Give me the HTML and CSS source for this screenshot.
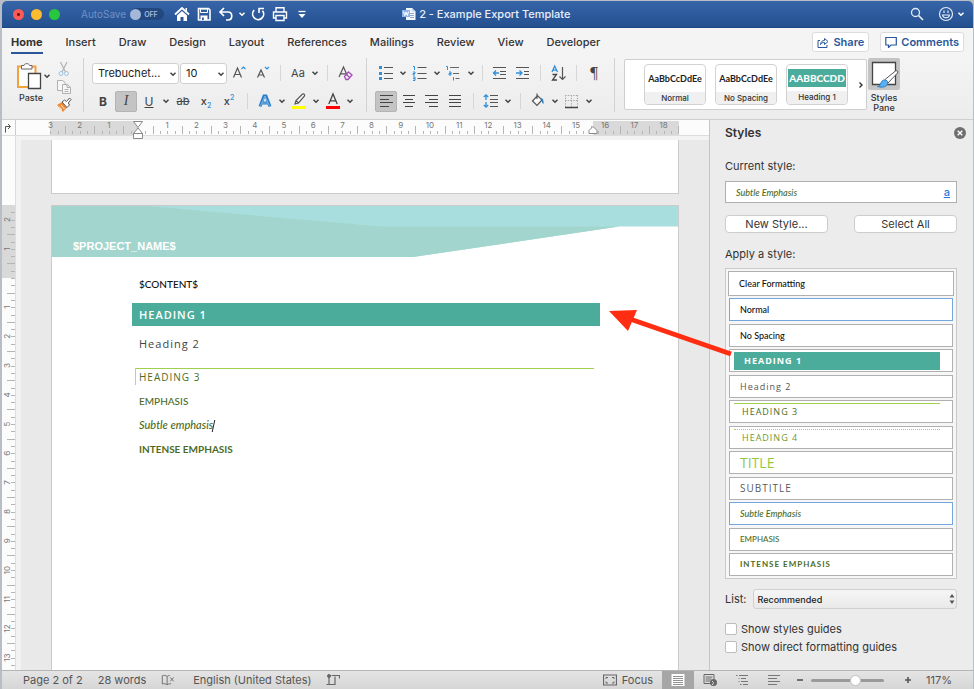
FILE: index.html
```html
<!DOCTYPE html>
<html lang="en">
  <head>
    <meta charset="UTF-8" />
    <meta name="viewport" content="width=device-width, initial-scale=1.0" />
    <title>2 - Example Export Template</title>
    <link rel="stylesheet" href="styles.css">
  </head>
  <body>
    <svg class="defs" aria-hidden="true">
      <symbol id="chev" viewBox="0 0 8 8"><path d="M1.5 2.8 4 5.3 6.5 2.8" fill="none" stroke="currentColor" stroke-width="1.5" /></symbol>
      <symbol id="align-left" viewBox="0 0 20 20"><path d="M4 4.500h13M4 8.500h9M4 11.500h13M4 15.500h9" stroke="#444" stroke-width="1.2" /></symbol>
    </svg>

    <div id="app">
      <header id="titlebar">
        <div class="lights">
          <button class="light red" aria-label="Close"></button>
          <button class="light yellow" aria-label="Minimize"></button>
          <button class="light green" aria-label="Zoom"></button>
        </div>
        <label class="autosave" for="autosave">AutoSave</label>
        <button class="toggle" id="autosave"><span class="knob"></span>OFF</button>
        <div class="quick">
          <button class="qbtn" aria-label="Home"><svg viewBox="0 0 16 16"><path d="M1 8.500 8 2l7 6.500" fill="none" stroke="#fff" stroke-width="1.800" /><path d="M3 9.500 8 5l5 4.500V15H9.500v-4h-3v4H3z" fill="#fff" /><path d="M11.500 2H13v4l-1.500-1.500z" fill="#fff" /></svg></button>
          <button class="qbtn" aria-label="Save"><svg viewBox="0 0 16 16"><path d="M2.500 2.500h10l1.500 1.500v10h-11.500z" fill="none" stroke="#fff" stroke-width="1.600" /><path d="M4.500 3h7v3.500h-7z" fill="none" stroke="#fff" /><path d="M4.500 9.500h7V14h-7z" fill="#fff" /><path d="M6 11.500h1.800V14H6z" fill="#2c5aa0" /></svg></button>
          <button class="qbtn" aria-label="Undo"><svg viewBox="0 0 16 16"><path d="M6 2 2 6l4 4M2.500 6h7.500c5 0 5 8 0 8H8" fill="none" stroke="#fff" stroke-width="1.700" /></svg></button>
          <button class="qchev" aria-label="Undo list"><svg viewBox="0 0 8 8"><use href="#chev" /></svg></button>
          <button class="qbtn" aria-label="Redo"><svg viewBox="0 0 16 16"><path d="M4.200 4.200a5.500 5.500 0 1 0 8.300.5" fill="none" stroke="#fff" stroke-width="1.700" /><path d="M9 7V2.500h5" fill="none" stroke="#fff" stroke-width="1.600" /></svg></button>
          <button class="qbtn" aria-label="Print"><svg viewBox="0 0 16 16" fill="none" stroke="#fff" stroke-width="1.400"><path d="M4 6V1.700h8V6M4 12H1.500V6h13v6H12" /><path d="M4 9.500h8v5H4z" /></svg></button>
          <button class="qbtn" aria-label="Customize"><svg viewBox="0 0 16 16"><path d="M4.500 5.500h7" stroke="#fff" stroke-width="1.300" /><path d="M4.500 8h7L8 12z" fill="#fff" /></svg></button>
        </div>
        <h1 class="doc-title">
          <svg viewBox="0 0 14 14"><path d="M4 1h6l3.500 3.500V13H4z" fill="#f3f7fd" /><path d="M10 1v3.500h3.500" fill="#bcd0ee" /><path d="M8 6.500h4M8 8.500h4M8 10.500h4" stroke="#8fa9d2" /><path d="M0 3h8v7H0z" fill="#8fb4e8" /><path d="m1.500 4.500 1.200 4L4 5l1.300 3.500 1.200-4" fill="none" stroke="#fff" /></svg>
          2 - Example Export Template
        </h1>
        <button class="qbtn search" aria-label="Search"><svg viewBox="0 0 16 16" fill="none" stroke="#e4ebf7"><circle cx="6.500" cy="6.500" r="4" stroke-width="1.300" /><path d="m9.500 9.500 4.500 4.500" stroke-width="1.700" /></svg></button>
        <button class="qbtn smile" aria-label="Feedback"><svg viewBox="0 0 16 16" fill="none" stroke="#e4ebf7" stroke-width="1.200"><circle cx="8" cy="8" r="6.500" /><path d="M4.500 9c.8 3.800 6.200 3.800 7 0zM6 4.500v2.500M10 4.500v2.500" /></svg></button>
        <button class="qchev" aria-label="Feedback menu"><svg viewBox="0 0 8 8"><use href="#chev" /></svg></button>
      </header>

      <nav id="tabs">
        <a href="#" class="tab active">Home</a>
        <a href="#" class="tab">Insert</a>
        <a href="#" class="tab">Draw</a>
        <a href="#" class="tab">Design</a>
        <a href="#" class="tab">Layout</a>
        <a href="#" class="tab">References</a>
        <a href="#" class="tab">Mailings</a>
        <a href="#" class="tab">Review</a>
        <a href="#" class="tab">View</a>
        <a href="#" class="tab">Developer</a>
        <button class="pill share"><svg viewBox="0 0 12 12" fill="none" stroke="#2b579a"><path d="M3 4.500H1v7h9V9" /><path d="M3.500 8.500c.3-3 2-4 4-4V2.500L11 5.500 7.500 8.500v-2c-2 0-3 .5-4 2z" /></svg>Share</button>
        <button class="pill"><svg viewBox="0 0 12 12" fill="none" stroke="#2b579a"><path d="M.8 1.500h10.500v7.500H6L3.500 11.500V9H.8z" stroke-width="1.200" /></svg>Comments</button>
      </nav>

      <section id="ribbon">
        <div class="group clipboard">
          <button class="paste">
            <span class="paste-top">
              <svg class="paste-icon" viewBox="0 0 26 28"><path d="M2 4.500h17.500v20.500H2z" fill="#fdfdfd" stroke="#f2a23c" stroke-width="2" /><path d="M5.500 7V3.500H8c.3-2.500 5.200-2.500 5.500 0H16V7z" fill="#fff" stroke="#666" /><path d="M12.500 11.500h12v15h-12z" fill="#fff" stroke="#444" stroke-width="1.300" /></svg>
              <svg class="chev" viewBox="0 0 8 8"><use href="#chev" /></svg>
            </span>
            <span>Paste</span>
          </button>
          <div class="clip-tools">
            <button aria-label="Cut"><svg viewBox="0 0 16 16" fill="none"><path d="m4.500 1 5 10M11 1 6 11" stroke="#b5b5b5" stroke-width="1.300" /><circle cx="5" cy="12.500" r="2" stroke="#9cc4e4" /><circle cx="10.500" cy="12.500" r="2" stroke="#9cc4e4" /></svg></button>
            <button aria-label="Copy"><svg viewBox="0 0 16 16" fill="#f7f7f7" stroke="#b0b0b0"><path d="M1.500 1.500h5l2.500 2v8H1.500z" /><path d="M6.500 5.500h5l3 3v6h-8zM11 5.500v3h3.500M8.500 10.500h4M8.500 12.500h4" /></svg></button>
            <button aria-label="Format painter"><svg viewBox="0 0 16 16"><path d="m1 8 5-3 5 5.500-4 4.500z" fill="#ef8a33" /><path d="M3 9.500 6 13M5 8l3.500 4" stroke="#fff" stroke-width=".8" /><path d="m6 5 2.500-2 2 1.500L13.500 1l1.500 1.500-2.700 3.500 1.200 2L11 10.500z" fill="#fff" stroke="#555" /></svg></button>
          </div>
        </div>

        <div class="group font">
          <div class="tool-row">
            <span class="picker family"><select aria-label="Font"><option>Trebuchet...</option></select><svg class="chev" viewBox="0 0 8 8"><use href="#chev" /></svg></span>
            <span class="picker size"><select aria-label="Font size"><option>10</option></select><svg class="chev" viewBox="0 0 8 8"><use href="#chev" /></svg></span>
            <button class="tool" aria-label="Grow font"><svg viewBox="0 0 20 20" fill="none"><path d="M4.500 14.500 8.500 5l4 9.500M5.800 11.500h5.400" stroke="#555" stroke-width="1.200" /><path d="m12.500 6 2-2 2 2" stroke="#2f8fd8" stroke-width="1.200" /></svg></button>
            <button class="tool" aria-label="Shrink font"><svg viewBox="0 0 20 20" fill="none"><path d="M5.500 14.500 9 7l3.500 7.500M6.800 12h4.500" stroke="#555" stroke-width="1.200" /><path d="m13 4 2 2 2-2" stroke="#2f8fd8" stroke-width="1.200" /></svg></button>
            <span class="sep"></span>
            <button class="tool case">Aa</button>
            <button class="drop" aria-label="Change case"><svg class="chev" viewBox="0 0 8 8"><use href="#chev" /></svg></button>
            <span class="sep"></span>
            <button class="tool" aria-label="Clear formatting"><svg viewBox="0 0 20 20" fill="none"><path d="M4 14 8.500 4 12 12M5.500 10.800h5.500" stroke="#555" stroke-width="1.200" /><path d="m9.500 13.500 4-4.500 3.500 3-4 4.500h-2zM11.500 11.500l3 3" stroke="#a44fb5" stroke-width="1.300" /></svg></button>
          </div>
          <div class="tool-row">
            <button class="tool bold">B</button>
            <button class="tool italic on">I</button>
            <button class="tool under">U</button>
            <button class="drop" aria-label="Underline styles"><svg class="chev" viewBox="0 0 8 8"><use href="#chev" /></svg></button>
            <button class="tool strike">ab</button>
            <button class="tool script">x<sub>2</sub></button>
            <button class="tool script">x<sup>2</sup></button>
            <span class="sep"></span>
            <button class="tool" aria-label="Text effects"><svg viewBox="0 0 20 20"><path d="M5 15.500 9 5h2l4 10.500M6.500 12h7" fill="none" stroke="#2a7fc9" stroke-width="3" /><path d="M5.500 15 10 5l4.500 10M7 12h6" fill="none" stroke="#8dc3f0" stroke-width=".8" /></svg></button>
            <button class="drop" aria-label="Effects list"><svg class="chev" viewBox="0 0 8 8"><use href="#chev" /></svg></button>
            <button class="tool" aria-label="Highlight"><svg viewBox="0 0 20 20"><path d="m6 13 1-3.500 6.500-6.500c1.500-.5 2.500.7 2 2L9.500 12zM7 9.500 9.500 12" fill="#f8f8f8" stroke="#555" stroke-width="1.200" /><path d="M3 15h14v3H3z" fill="#ffff00" /></svg></button>
            <button class="drop" aria-label="Highlight colors"><svg class="chev" viewBox="0 0 8 8"><use href="#chev" /></svg></button>
            <button class="tool" aria-label="Font color"><svg viewBox="0 0 20 20"><path d="m5.800 13 4.200-10 4.200 10M7.300 9.800h5.400" fill="none" stroke="#444" stroke-width="1.300" /><path d="M3 15h14v3H3z" fill="#ff0000" /></svg></button>
            <button class="drop" aria-label="Font colors"><svg class="chev" viewBox="0 0 8 8"><use href="#chev" /></svg></button>
          </div>
        </div>

        <div class="group paragraph">
          <div class="tool-row">
            <button class="tool" aria-label="Bullets"><svg viewBox="0 0 20 20"><path d="M3 3h3v3H3zM3 9h3v3H3zM3 14h3v3H3z" fill="#2f8fd8" /><path d="M8 4.500h9M8 10.500h9M8 15.500h9" stroke="#555" stroke-width="1.200" /></svg></button>
            <button class="drop" aria-label="Bullet styles"><svg class="chev" viewBox="0 0 8 8"><use href="#chev" /></svg></button>
            <button class="tool" aria-label="Numbering"><svg viewBox="0 0 20 20"><path d="M3 3.500h1.500V7M3 9h2v1.500H3V12h2M3 14h2v3.500H3M3 15.700h2" fill="none" stroke="#2f8fd8" /><path d="M7.500 4.500h9M7.500 10.500h9M7.500 15.500h9" stroke="#555" stroke-width="1.200" /></svg></button>
            <button class="drop" aria-label="Number styles"><svg class="chev" viewBox="0 0 8 8"><use href="#chev" /></svg></button>
            <button class="tool" aria-label="Multilevel list"><svg viewBox="0 0 20 20"><path d="M2 3.500h1.500V7M5 9h2v3H5v-1.500h2M9.500 14v3.500" fill="none" stroke="#2f8fd8" /><path d="M6 4.500h9M9 10.500h6M11.500 15.500h4" stroke="#666" stroke-width="1.200" /></svg></button>
            <button class="drop" aria-label="List styles"><svg class="chev" viewBox="0 0 8 8"><use href="#chev" /></svg></button>
            <span class="sep"></span>
            <button class="tool" aria-label="Decrease indent"><svg viewBox="0 0 20 20" fill="none"><path d="M3 4.500h13M10 8.500h6M10 11.500h6M3 15.500h13" stroke="#555" stroke-width="1.200" /><path d="M9 10H3.500M6 7.500 3.500 10 6 12.500" stroke="#2f8fd8" stroke-width="1.300" /></svg></button>
            <button class="tool" aria-label="Increase indent"><svg viewBox="0 0 20 20" fill="none"><path d="M3 4.500h13M11 8.500h5M11 11.500h5M3 15.500h13" stroke="#555" stroke-width="1.200" /><path d="M3 10h5.500M6.500 7.500 9 10l-2.500 2.500" stroke="#2f8fd8" stroke-width="1.300" /></svg></button>
            <span class="sep"></span>
            <button class="tool" aria-label="Sort"><svg viewBox="0 0 20 20" fill="none"><path d="M3 9 5.700 3 8.500 9M4 7.200h3.500" stroke="#2f8fd8" stroke-width="1.300" /><path d="M3.500 11.500h4L3.500 17h4.500" stroke="#444" stroke-width="1.300" /><path d="M13.500 4v12.500M10.500 13.500l3 3 3-3" stroke="#555" stroke-width="1.200" /></svg></button>
            <span class="sep"></span>
            <button class="tool pilcrow">¶</button>
          </div>
          <div class="tool-row">
            <button class="tool on" aria-label="Align left"><svg viewBox="0 0 20 20"><use href="#align-left" /></svg></button>
            <button class="tool" aria-label="Center"><svg viewBox="0 0 20 20"><path d="M4 4.500h12M6 8.500h8M4 11.500h12M6 15.500h8" stroke="#444" stroke-width="1.200" /></svg></button>
            <button class="tool" aria-label="Align right"><svg viewBox="0 0 20 20"><path d="M3 4.500h13M7 8.500h9M3 11.500h13M7 15.500h9" stroke="#444" stroke-width="1.200" /></svg></button>
            <button class="tool" aria-label="Justify"><svg viewBox="0 0 20 20"><path d="M4 4.500h12M4 8.500h12M4 11.500h12M4 15.500h12" stroke="#444" stroke-width="1.200" /></svg></button>
            <span class="sep"></span>
            <button class="tool" aria-label="Line spacing"><svg viewBox="0 0 20 20" fill="none"><path d="M5 4v5M5 11v5M2.800 6 5 3.800 7.200 6M2.800 14 5 16.200 7.200 14" stroke="#2f8fd8" stroke-width="1.300" /><path d="M9 4.500h8M9 8.500h8M9 11.500h8M9 15.500h8" stroke="#555" stroke-width="1.200" /></svg></button>
            <button class="drop" aria-label="Spacing options"><svg class="chev" viewBox="0 0 8 8"><use href="#chev" /></svg></button>
            <span class="sep"></span>
            <button class="tool" aria-label="Shading"><svg viewBox="0 0 20 20"><path d="m4.500 10 5-5.500 4.500 4.500-5 5.500zM9 2.500V8" fill="#fafafa" stroke="#555" stroke-width="1.200" /><path d="M12 7c3-.5 4 2.500 3.500 6-1.500-1-2-2.500-1.500-4z" fill="#2a7fc9" /></svg></button>
            <button class="drop" aria-label="Shading colors"><svg class="chev" viewBox="0 0 8 8"><use href="#chev" /></svg></button>
            <button class="tool" aria-label="Borders"><svg viewBox="0 0 20 20"><path d="M3.500 4v12M9.500 4v12M15.500 4v12M3 4.500h13M3 9.500h13" stroke="#aaa" stroke-dasharray="1.500 1.200" /><path d="M3 16.500h13" stroke="#444" stroke-width="1.500" /></svg></button>
            <button class="drop" aria-label="Border styles"><svg class="chev" viewBox="0 0 8 8"><use href="#chev" /></svg></button>
          </div>
        </div>

        <div class="gallery">
          <button class="card"><span class="preview">AaBbCcDdEe</span><span class="name">Normal</span></button>
          <button class="card"><span class="preview">AaBbCcDdEe</span><span class="name">No Spacing</span></button>
          <button class="card"><span class="preview filled"><b>AABBCCDD</b></span><span class="name">Heading 1</span></button>
          <button class="more" aria-label="More styles"><svg viewBox="0 0 8 8"><path d="M2.500 1.500 5 4 2.500 6.500" fill="none" stroke="#333" stroke-width="1.400" /></svg></button>
        </div>
        <button class="styles-btn">
          <span class="styles-icon"><svg viewBox="0 0 32 30"><path d="M4.500 3.500h23v22h-23z" fill="#fff" stroke="#444" stroke-width="1.300" /><path d="M17 20.500 27.500 12c2-.8 2.800.3 2 2L20 24z" fill="#fff" stroke="#555" /><path d="M9.500 27.500c4 0 2.500-7 7.500-6.500 3 .2 3.500 3.500 1.500 5.500s-6 2-9 1z" fill="#5cb0f0" stroke="#2a7fc9" /></svg></span>
          <span>Styles<br>Pane</span>
        </button>
      </section>

      <main id="workspace">
        <div id="editor">
          <div class="hruler">
            <span class="tab-stop"><svg viewBox="0 0 8 10"><path d="M1.500 9.500V3.500H6M4 1l2.500 2.500L4 6" fill="none" stroke="#555" /></svg></span>
            <svg id="ruler-x"></svg>
          </div>
          <div class="canvas">
            <svg id="ruler-y"></svg>
            <div class="pages">
              <article class="page previous"></article>
              <article class="page current">
                <div class="page-header">
                  <svg viewBox="0 0 628 52" preserveAspectRatio="none"><path d="M0 0h628v21h-59L362 52H0z" fill="#a8dedd" /><path d="M0 0h95L330 21h239L362 52H0z" fill="#a2d5cd" /></svg>
                  <p>$PROJECT_NAME$</p>
                </div>
                <div class="content">
                  <p class="normal">$CONTENT$</p>
                  <h2 class="h1">HEADING 1</h2>
                  <h3 class="h2">Heading 2</h3>
                  <h4 class="h3">HEADING 3</h4>
                  <p class="emphasis">EMPHASIS</p>
                  <p class="subtle">Subtle emphasis<span class="caret"></span></p>
                  <p class="intense">INTENSE EMPHASIS</p>
                </div>
              </article>
            </div>
          </div>
        </div>

        <aside id="styles-pane">
          <div class="pane-head">
            <h2>Styles</h2>
            <button class="close" aria-label="Close pane"><svg viewBox="0 0 12 12"><circle cx="6" cy="6" r="6" fill="#6f6f6f" /><path d="m3.700 3.700 4.600 4.600M8.300 3.700 3.700 8.300" stroke="#fff" stroke-width="1.400" /></svg></button>
          </div>
          <p class="pane-label">Current style:</p>
          <div class="current-style"><span>Subtle Emphasis</span><a href="#">a</a></div>
          <div class="pane-buttons">
            <button>New Style...</button>
            <button>Select All</button>
          </div>
          <p class="pane-label">Apply a style:</p>
          <div class="style-list">
            <button class="style clear">Clear Formatting</button>
            <button class="style picked">Normal</button>
            <button class="style">No Spacing</button>
            <button class="style s-h1"><span>HEADING 1</span></button>
            <button class="style s-h2">Heading 2</button>
            <button class="style s-h3"><span>HEADING 3</span></button>
            <button class="style s-h4"><span>HEADING 4</span></button>
            <button class="style s-title">TITLE</button>
            <button class="style s-subtitle">SUBTITLE</button>
            <button class="style s-subtle picked">Subtle Emphasis</button>
            <button class="style s-emphasis">EMPHASIS</button>
            <button class="style s-intense">INTENSE EMPHASIS</button>
          </div>
          <div class="list-row">
            <label for="list">List:</label>
            <span class="list-select">
              <select id="list"><option>Recommended</option></select>
              <svg viewBox="0 0 6 12"><path d="M.5 4.500 3 1l2.500 3.500zM.5 7.500 3 11l2.500-3.500z" fill="#555" /></svg>
            </span>
          </div>
          <label class="check"><input type="checkbox">Show styles guides</label>
          <label class="check"><input type="checkbox">Show direct formatting guides</label>
        </aside>

        <svg class="arrow" viewBox="0 0 124 50" aria-hidden="true"><path d="M123 44 22 9" stroke="#ff2d12" stroke-width="5" /><path d="M1 1 29 0 20 21z" fill="#ff2d12" /></svg>
      </main>

      <footer id="statusbar">
        <span class="pages-count">Page 2 of 2</span>
        <span>28 words</span>
        <button class="st proof" aria-label="Proofing"><svg viewBox="0 0 16 14" fill="none" stroke="#666"><path d="M7 3C5.500 1.500 3 1.500 1.500 2v9.500c2-.5 4-.3 5.500 1 1-1 2.500-1.300 4.500-1.200M7 3v9.500M7 3c.8-.8 1.800-1.200 3-1.200M10.500 4l4 4.500M14.500 4l-4 4.500" /></svg></button>
        <span>English (United States)</span>
        <button class="st" aria-label="Track changes"><svg viewBox="0 0 14 14" fill="none" stroke="#666"><circle cx="3" cy="3" r="1.500" fill="#666" /><path d="M3 4v7.500M.5 11.500h8.500v-8M5.500 2.500h8v3" stroke-width="1.200" /></svg></button>
        <button class="focus"><svg viewBox="0 0 14 12" fill="none" stroke="#666"><path d="M.5 1h13v10H.5z" stroke-width="1.200" /><path d="M3 5V3.500h2M9 3.500h2V5M11 7.500V9H9M5 9H3V7.500" /></svg>Focus</button>
        <button class="view on" aria-label="Print layout"><svg viewBox="0 0 14 14"><path d="M.5 1h13v12H.5z" fill="#fff" /><path d="M2 3.500h10M2 5.500h10M2 7.500h10M2 9.500h10M2 11.500h10" stroke="#777" stroke-width=".8" /></svg></button>
        <button class="view" aria-label="Web layout"><svg viewBox="0 0 14 14"><path d="M1 1.500h10v9H1z" fill="none" stroke="#666" /><path d="M2.500 4h7M2.500 6h6M2.500 8h5" stroke="#666" /><circle cx="10.500" cy="9.500" r="3.500" fill="#666" /><path d="m9 8 1.500 1.500L9.500 12" fill="none" stroke="#ddd" /></svg></button>
        <button class="view" aria-label="Outline"><svg viewBox="0 0 14 14"><path d="M1 2.500h1.500M4 2.500h9M3.500 5.500h1M6 5.500h5M3.500 8.500h1M6 8.500h7M5 11.500h1.500M8 11.500h5" stroke="#777" /></svg></button>
        <button class="view" aria-label="Draft"><svg viewBox="0 0 14 14"><path d="M1 2.500h12M1 5.500h9M1 8.500h12M1 11.500h9" stroke="#777" stroke-width="1.200" /></svg></button>
        <button class="zoom-btn" aria-label="Zoom out"><svg viewBox="0 0 8 8"><path d="M1 4h6" stroke="#555" stroke-width="1.600" /></svg></button>
        <input class="zoom-range" type="range" min="0" max="100" value="63" aria-label="Zoom">
        <button class="zoom-btn" aria-label="Zoom in"><svg viewBox="0 0 8 8"><path d="M1 4h6M4 1v6" stroke="#555" stroke-width="1.600" /></svg></button>
        <span class="percent">117%</span>
      </footer>
    </div>
    <script src="script.js"></script>
  </body>
</html>
```

FILE: styles.css
```css
* {
  box-sizing: border-box;
}
body {
  font-family: Inter, "Liberation Sans", sans-serif;
  font-size: 11px;
  color: #333;
  margin: 0;
  background-color: #b9bec6;
}
h1, h2, h3, h4, p {
  margin: 0;
  font-size: inherit;
  font-weight: normal;
}
button, select, input {
  font: inherit;
  color: inherit;
  margin: 0;
  padding: 0;
}
button {
  border: none;
  background: none;
}
svg {
  display: block;
  flex: none;
}
a {
  color: inherit;
  text-decoration: none;
}
.defs {
  position: absolute;
  width: 0;
  height: 0;
}
#app {
  display: flex;
  flex-direction: column;
  height: 100vh;
  padding: 1px 1px 0 2px;
}

/* Title bar */
#titlebar {
  display: flex;
  align-items: center;
  height: 27px;
  flex: none;
  padding: 0 8px 0 11px;
  background: linear-gradient(#3765a9, #24508f);
  border-radius: 5px 5px 0 0;
  border-bottom: 1px solid #1d4583;
  color: #fff;
}
.lights {
  display: flex;
  gap: 7px;
}
.light {
  width: 11px;
  height: 11px;
  border-radius: 50%;
}
.red {
  background: radial-gradient(#7d0d08 1px, #fc5b57 2px);
}
.yellow {
  background-color: #fdbc30;
}
.green {
  background-color: #27c83f;
}
.autosave {
  margin-left: 21px;
  color: #7091c5;
  font-size: 10px;
}
.toggle {
  display: flex;
  align-items: center;
  gap: 3px;
  width: 34px;
  height: 12px;
  margin-left: 4px;
  border-radius: 6px;
  background-color: #23477f;
  color: #a9bcdd;
  font-size: 7px;
  font-weight: 600;
}
.knob {
  width: 11px;
  height: 11px;
  border-radius: 50%;
  background-color: #a5b8d9;
}
.quick {
  display: flex;
  align-items: center;
  gap: 6px;
  margin-left: 10px;
}
.qbtn svg {
  width: 16px;
  height: 16px;
}
.qchev svg {
  width: 8px;
  height: 8px;
}
.quick .qchev {
  margin: 0 -2px;
}
.doc-title {
  display: flex;
  align-items: center;
  gap: 3px;
  margin: 0 auto 0 92px;
  font-weight: 500;
  color: #e9eff9;
}
.doc-title svg {
  width: 14px;
  height: 14px;
}
.search {
  margin-right: 13px;
}
.smile {
  margin-right: 3px;
}

/* Tabs */
#tabs {
  display: flex;
  align-items: center;
  gap: 23px;
  height: 28px;
  flex: none;
  padding: 0 9px;
  background-color: #f5f4f5;
  font-weight: 500;
}
.tab {
  line-height: 19px;
  padding-top: 2px;
  border-bottom: 2px solid transparent;
}
.tab.active {
  font-weight: 700;
  border-color: #2b579a;
}
.pill {
  display: flex;
  align-items: center;
  gap: 4px;
  height: 20px;
  padding: 0 4px;
  border: 1px solid #dcdcdc;
  border-radius: 3px;
  background-color: #fff;
  color: #2b579a;
  font-weight: 600;
}
.pill svg {
  width: 12px;
  height: 12px;
}
.share {
  margin: 0 -12px 0 auto;
}

/* Ribbon */
#ribbon {
  display: flex;
  height: 64px;
  flex: none;
  padding-top: 2px;
  background: linear-gradient(#f4f4f4, #ececec);
  border-bottom: 1px solid #cfcfcf;
}
.group {
  flex: none;
  height: 54px;
  border-right: 1px solid #d2d2d2;
}
.chev {
  width: 8px;
  height: 8px;
  color: #444;
}
.clipboard {
  display: flex;
  width: 82px;
}
.paste {
  display: flex;
  flex-direction: column;
  align-items: flex-start;
  padding: 4px 0 0 14px;
  gap: 2px;
  font-size: 9px;
  font-weight: 500;
}
.paste-top {
  display: flex;
  align-items: center;
  gap: 1px;
}
.paste-top + span {
  padding-left: 3px;
}
.paste-icon {
  width: 26px;
  height: 28px;
}
.clip-tools {
  display: flex;
  flex-direction: column;
  gap: 2px;
  padding: 3px 0 0 5px;
}
.clip-tools svg {
  width: 16px;
  height: 16px;
}
.font,
.paragraph {
  display: flex;
  flex-direction: column;
  justify-content: space-between;
  padding: 4px 9px 0 8px;
}
.font {
  width: 283px;
}
.paragraph {
  width: 248px;
}
.tool-row {
  display: flex;
  align-items: center;
  gap: 1px;
  height: 22px;
}
.tool {
  display: flex;
  align-items: center;
  justify-content: center;
  flex: none;
  width: 22px;
  height: 21px;
  color: #444;
}
.tool svg {
  width: 20px;
  height: 20px;
}
.tool.on {
  background-color: #c4c4c4;
  border: 1px solid #b4b4b4;
  border-radius: 2px;
}
.drop {
  display: flex;
  align-items: center;
  justify-content: center;
  flex: none;
  width: 10px;
  height: 21px;
}
.sep {
  width: 12px;
  height: 16px;
  background: linear-gradient(#d6d6d6, #d6d6d6) center / 1px 100% no-repeat;
}
.picker {
  position: relative;
  height: 21px;
}
.picker select,
.list-select select {
  appearance: none;
  width: 100%;
  height: 100%;
  border: 1px solid #d0d0d0;
  border-radius: 3px;
  background-color: #fff;
  padding-left: 5px;
  color: #222;
}
.picker .chev {
  position: absolute;
  right: 2px;
  top: 7px;
}
.family {
  width: 87px;
}
.size {
  width: 47px;
}
.case {
  font-size: 11px;
}
.bold {
  font-weight: 700;
  font-size: 12px;
}
.italic {
  font-family: "Liberation Serif", serif;
  font-style: italic;
  font-size: 14px;
}
.under {
  text-decoration: underline;
  font-size: 12px;
}
.strike {
  text-decoration: line-through;
}
.script {
  display: block;
  font-weight: 500;
  font-size: 11px;
  line-height: 16px;
}
.script sub,
.script sup {
  font-size: 7px;
  line-height: 0;
  color: #2f8fd8;
}
.pilcrow {
  font-family: "Liberation Serif", serif;
  font-size: 17px;
}
.gallery {
  display: flex;
  align-items: center;
  gap: 9px;
  width: 243px;
  height: 51px;
  flex: none;
  margin: 1px 1px 0 9px;
  padding-left: 19px;
  border: 1px solid #cfcfcf;
  border-radius: 2px;
  background-color: #fff;
}
.card {
  display: flex;
  flex-direction: column;
  flex: none;
  width: 62px;
  height: 41px;
  border: 1px solid #d2d2d2;
  border-radius: 4px;
  overflow: hidden;
  font-size: 9px;
  background-color: #fff;
}
.preview {
  width: 100%;
  height: 27px;
  line-height: 27px;
  font-family: Lato, sans-serif;
  font-weight: 700;
  color: #222;
}
.preview.filled {
  padding: 4px 1px;
}
.preview b {
  display: block;
  height: 18px;
  line-height: 18px;
  background-color: #4bac9b;
  color: #fff;
  font-size: 10px;
}
.name {
  width: 100%;
  height: 13px;
  line-height: 13px;
  background-color: #f0f0f0;
  font-size: 8px;
  font-weight: 500;
}
.more svg {
  width: 8px;
  height: 8px;
}
.styles-btn {
  display: flex;
  flex-direction: column;
  align-items: center;
  gap: 3px;
  font-size: 9px;
  font-weight: 500;
  line-height: 10px;
}
.styles-icon {
  width: 32px;
  height: 32px;
  padding-top: 1px;
  background-color: #c4c4c4;
  border-radius: 2px;
}
.styles-icon svg {
  width: 32px;
  height: 30px;
}

/* Document area */
#workspace {
  position: relative;
  display: flex;
  flex: 1;
  min-height: 0;
}
#editor {
  display: flex;
  flex-direction: column;
  flex: 1;
  min-width: 0;
  background-color: #f3f3f3;
}
.hruler {
  display: flex;
  height: 16px;
  flex: none;
  background-color: #fcfcfc;
  border-bottom: 1px solid #ddd;
}
.tab-stop {
  width: 14px;
  padding: 3px 0 0 2px;
  border-right: 1px solid #ccc;
}
.tab-stop svg {
  width: 8px;
  height: 10px;
}
#ruler-x {
  flex: 1;
  height: 20px;
}
.canvas {
  display: flex;
  flex: 1;
  min-height: 0;
}
#ruler-y {
  width: 14px;
  height: 100%;
  border-right: 1px solid #ddd;
  background-color: #fcfcfc;
}
.pages {
  flex: 1;
  display: flex;
  flex-direction: column;
  gap: 11px;
  margin: 4px 0 0 5px;
  padding: 0 30px;
  background-color: #e9e9e9;
  overflow: hidden;
}
.page {
  background-color: #fff;
  border: 1px solid #cbcbcb;
}
.previous {
  height: 54px;
  flex: none;
  border-top: none;
}
.current {
  flex: 1;
  border-bottom: none;
}
.page-header {
  height: 51px;
  display: grid;
}
.page-header > * {
  grid-area: 1 / 1;
}
.page-header svg {
  width: 100%;
  height: 51px;
}
.page-header p {
  align-self: end;
  padding-left: 21px;
  line-height: 22px;
  color: #fff;
  font-family: "Liberation Sans", sans-serif;
  font-weight: 700;
}
.content {
  padding: 15px 78px 0 80px;
  font-family: "Open Sans", sans-serif;
  font-size: 11px;
  line-height: 24px;
  color: #111;
}
.content > * {
  padding-left: 7px;
}
.content .normal,
.content .emphasis,
.content .subtle,
.content .intense {
  font-family: Lato, sans-serif;
}
.content .normal,
.content .emphasis,
.content .intense {
  font-size: 10px;
}
.content .normal {
  font-weight: 500;
}
.content .h1 {
  margin: 7px 0 6px;
  line-height: 23px;
  background-color: #4bac9b;
  color: #fff;
  font-weight: 600;
  letter-spacing: 1px;
}
.content .h2 {
  letter-spacing: 1px;
  color: #444;
}
.content .h3 {
  margin: 12px 6px 4px 3px;
  padding-left: 3px;
  line-height: 16px;
  border-top: 1px solid #9fd04c;
  border-left: 1px solid #b6dc78;
  color: #4d6b1f;
  font-size: 10px;
  font-weight: 500;
  letter-spacing: 1px;
}
.content .emphasis,
.content .subtle,
.content .intense {
  color: #4d6b1f;
}
.content .emphasis {
  font-weight: 500;
}
.content .subtle {
  font-style: italic;
  font-weight: 500;
}
.content .intense {
  font-weight: 700;
}
.caret {
  display: inline-block;
  height: 12px;
  border-left: 1px solid #222;
  vertical-align: middle;
  transform: skewX(-12deg);
}
.arrow {
  position: absolute;
  left: 606px;
  top: 190px;
  width: 124px;
  height: 50px;
}

/* Styles pane */
#styles-pane {
  display: flex;
  flex-direction: column;
  width: 264px;
  flex: none;
  padding: 4px 16px 14px 15px;
  background-color: #ececec;
  border-left: 1px solid #c6c6c6;
}
.pane-head {
  display: flex;
  justify-content: space-between;
  align-items: center;
  height: 17px;
  margin-right: -9px;
}
.pane-head h2 {
  font-size: 12px;
  font-weight: 600;
}
.close svg {
  width: 12px;
  height: 12px;
}
.pane-label {
  line-height: 16px;
  margin-top: 17px;
}
.current-style {
  display: flex;
  align-items: center;
  justify-content: space-between;
  height: 22px;
  margin: 7px 0 12px;
  padding: 0 6px 0 10px;
  border: 1px solid #b0b0b0;
  background-color: #fff;
  font-family: Lato, sans-serif;
  font-size: 9px;
  font-weight: 500;
  font-style: italic;
  color: #4d6b1f;
}
.current-style a {
  font-family: Inter, sans-serif;
  font-size: 11px;
  font-style: normal;
  color: #2878d8;
  text-decoration: underline;
}
.pane-buttons {
  display: flex;
  gap: 26px;
}
.pane-buttons button {
  flex: 1;
  height: 18px;
  border: 1px solid #cdcdcd;
  border-radius: 4px;
  background-color: #fff;
}
.pane-buttons + .pane-label {
  margin-top: 13px;
}
.style-list {
  display: flex;
  flex-direction: column;
  justify-content: space-between;
  flex: 1;
  margin-top: 6px;
  padding: 2px 3px;
  border: 1px solid #c9c9c9;
  background-color: #f6f6f6;
}
.style {
  height: 23px;
  padding: 0 10px;
  border: 1px solid #b0b0b0;
  background-color: #fff;
  font-family: Lato, sans-serif;
  font-size: 9px;
  font-weight: 500;
  text-align: left;
  color: #111;
}
.style.clear {
  height: 25px;
  margin: 0 -1px;
}
.style.picked {
  border-color: #74a7dc;
}
.style span {
  display: block;
}
.s-h1,
.s-h3,
.s-h4 {
  padding: 0 12px 0 4px;
}
.s-h1,
.s-h2,
.s-h3,
.s-h4,
.s-subtitle {
  font-family: "Open Sans", sans-serif;
  letter-spacing: 1px;
}
.s-h1 span {
  padding-left: 10px;
  line-height: 18px;
  background-color: #4bac9b;
  color: #fff;
  font-weight: 700;
}
.s-h2 {
  color: #555;
}
.s-h3 span {
  padding-left: 8px;
  line-height: 16px;
  border-top: 1px solid #9fd04c;
  color: #4d6b1f;
}
.s-h4 span {
  padding-left: 8px;
  line-height: 16px;
  border-top: 1px dotted #9fd04c;
  color: #6f9a2b;
}
.s-title {
  color: #92c83e;
  font-family: "Open Sans", sans-serif;
  font-size: 14px;
  line-height: 20px;
}
.s-subtitle {
  color: #5a5a5a;
  font-size: 10px;
}
.s-subtle,
.s-emphasis,
.s-intense {
  color: #4d6b1f;
}
.s-subtle {
  font-style: italic;
}
.s-emphasis,
.s-intense {
  font-size: 8px;
}
.s-intense {
  font-weight: 700;
  letter-spacing: 1px;
}
.list-row {
  display: flex;
  align-items: center;
  gap: 7px;
  height: 20px;
  margin: 10px 0 11px;
}
.list-select {
  position: relative;
  flex: 1;
  height: 20px;
}
.list-select select {
  padding-left: 3px;
  background: linear-gradient(#f6f6f6, #e9e9e9);
  font-size: 9px;
  font-weight: 500;
}
.list-select svg {
  position: absolute;
  right: 2px;
  top: 4px;
  width: 6px;
  height: 12px;
}
.check {
  display: flex;
  align-items: center;
  gap: 4px;
  height: 18px;
}
.check input {
  appearance: none;
  width: 12px;
  height: 12px;
  border: 1px solid #bdbdbd;
  border-radius: 2px;
  background-color: #fff;
}

/* Status bar */
#statusbar {
  display: flex;
  align-items: center;
  height: 19px;
  flex: none;
  padding: 0 21px;
  border-top: 1px solid #b5b5b5;
  background: linear-gradient(#e4e4e4, #d6d6d6);
  color: #555;
}
.pages-count {
  margin-right: 15px;
}
.st svg {
  width: 14px;
  height: 14px;
}
.proof {
  margin: 0 18px 0 15px;
}
.proof + span {
  margin-right: 14px;
}
.focus {
  display: flex;
  align-items: center;
  gap: 5px;
  margin: 0 9px 0 auto;
}
.focus svg {
  width: 14px;
  height: 12px;
}
.view {
  display: flex;
  align-items: center;
  justify-content: center;
  width: 32px;
  height: 18px;
}
.view.on {
  background-color: #a6a6a6;
}
.view svg {
  width: 14px;
  height: 14px;
}
.zoom-btn {
  width: 20px;
  display: flex;
  justify-content: center;
}
.zoom-btn svg {
  width: 8px;
  height: 8px;
}
.zoom-range {
  appearance: none;
  width: 73px;
  height: 3px;
  margin: 0 14px 0 1px;
  border-radius: 2px;
  background-color: #9a9a9a;
}
.zoom-range::-webkit-slider-thumb {
  appearance: none;
  width: 11px;
  height: 11px;
  border: 1px solid #c0c0c0;
  border-radius: 50%;
  background-color: #fff;
}
.percent {
  margin-left: 8px;
}
```

FILE: script.js
```js
const CM = 29.2;

function el(parent, name, attrs, text) {
  const node = document.createElementNS("http://www.w3.org/2000/svg", name);
  for (const key in attrs) node.setAttribute(key, attrs[key]);
  if (text !== undefined) node.textContent = text;
  parent.appendChild(node);
}

const textStyle = {
  "font-size": 8,
  fill: "#777",
  "text-anchor": "middle",
};

// Horizontal ruler, zero at the left paragraph margin
const rx = document.getElementById("ruler-x");
const zeroX = 122;
const endX = 577;
el(rx, "rect", { x: 34, y: 1, width: zeroX - 34, height: 14, fill: "#d9d9d9" });
el(rx, "rect", { x: endX, y: 1, width: 86, height: 14, fill: "#d9d9d9" });
for (let q = -12; q <= 74; q++) {
  const x = zeroX + (q * CM) / 4;
  if (q % 4 === 0) {
    if (q !== 0) el(rx, "text", { x: x, y: 8, ...textStyle }, Math.abs(q / 4));
  }
  const top = q % 4 === 2 || q % 4 === -2 ? 6 : 11;
  el(rx, "path", { d: `M${Math.round(x) + 0.5} ${top}V14`, stroke: "#b5b5b5" });
}
el(rx, "path", { d: "M117.500 1.500h9l-4.500 6zM117.500 13.500 122 8l4.500 5.500zM117.500 13.500h9v5h-9z", fill: "#fff", stroke: "#888" });
el(rx, "path", { d: "M573 13.500v-3l4-4 4 4v3z", fill: "#fff", stroke: "#888" });

// Vertical ruler, zero at the top text margin
const ry = document.getElementById("ruler-y");
const zeroY = 142;
el(ry, "rect", { x: 0, y: 69, width: 14, height: zeroY - 69, fill: "#d9d9d9" });
for (let q = -9; q <= 54; q++) {
  const y = zeroY + (q * CM) / 4;
  if (q % 4 === 0 && q !== 0) {
    el(ry, "text", { transform: `translate(8 ${y}) rotate(-90)`, ...textStyle }, Math.abs(q / 4));
  }
  const left = q % 4 === 2 || q % 4 === -2 ? 5 : 9;
  el(ry, "path", { d: `M${left} ${Math.round(y) + 0.5}H13`, stroke: "#b5b5b5" });
}
```
